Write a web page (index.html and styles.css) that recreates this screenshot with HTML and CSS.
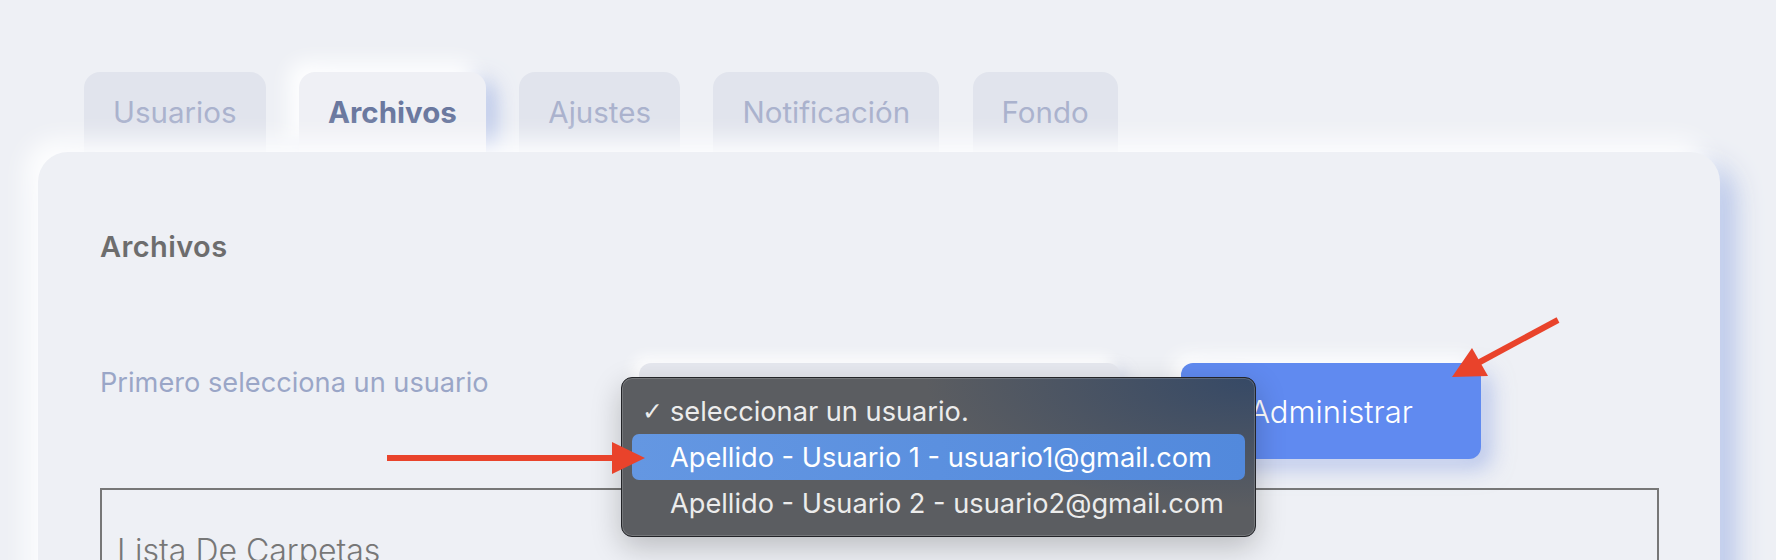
FILE: index.html
```html
<!DOCTYPE html>
<html lang="es">
<head>
<meta charset="utf-8">
<title>Archivos</title>
<link rel="stylesheet" href="styles.css">
</head>
<body>
<div class="page">
  <nav class="tabs">
    <div class="tab">Usuarios</div>
    <div class="tab tab-active">Archivos</div>
    <div class="tab">Ajustes</div>
    <div class="tab">Notificación</div>
    <div class="tab">Fondo</div>
  </nav>
  <section class="card">
    <h2 class="card-title">Archivos</h2>
    <div class="form-row">
      <label class="form-label">Primero selecciona un usuario</label>
      <div class="select"></div>
      <button class="btn">Administrar</button>
    </div>
    <div class="folder-box">
      <p class="folder-title">Lista De Carpetas</p>
    </div>
  </section>
  <ul class="dropdown">
    <li class="dd-item"><span class="dd-check">✓</span>seleccionar un usuario.</li>
    <li class="dd-item dd-hover"><span class="dd-check"></span>Apellido - Usuario 1 - usuario1@gmail.com</li>
    <li class="dd-item"><span class="dd-check"></span>Apellido - Usuario 2 - usuario2@gmail.com</li>
  </ul>
  <svg class="annotations" width="1776" height="560" viewBox="0 0 1776 560">
    <line x1="387" y1="458" x2="615" y2="458" stroke="#e9432b" stroke-width="6"/>
    <polygon points="612,442 645,458 612,474" fill="#e9432b"/>
    <line x1="1558" y1="320" x2="1478" y2="363" stroke="#e9432b" stroke-width="6"/>
    <polygon points="1452,377 1472,348 1488,376" fill="#e9432b"/>
  </svg>
</div>
</body>
</html>
```
FILE: styles.css
```css
* { box-sizing: border-box; }
html, body { margin: 0; padding: 0; }
body {
  background: #eef0f5;
  font-family: Inter, "Noto Sans", sans-serif;
}
.page {
  position: relative;
  width: 1776px;
  height: 560px;
  overflow: hidden;
  padding: 72px 0 0 38px;
}
.tabs {
  display: flex;
  gap: 33.5px;
  margin-left: 46px;
  height: 80px;
}
.tab {
  height: 80px;
  padding: 0 29px;
  display: flex;
  align-items: center;
  justify-content: center;
  background: #e1e4ed;
  border-radius: 16px 16px 0 0;
  color: #aab2cd;
  font-size: 29.5px;
  font-weight: 400;
  letter-spacing: 0;
}
.tab-active {
  background: #eff0f5;
  color: #6a789f;
  font-weight: 700;
  box-shadow: -10px -10px 20px #ffffff, 10px 8px 20px rgba(165, 183, 228, 0.75);
}
.card {
  position: relative;
  width: 1682px;
  height: 560px;
  background: #eef0f5;
  border-radius: 30px;
  padding: 77px 61px 0 62px;
  box-shadow: -12px -12px 24px rgba(255, 255, 255, 0.95), 14px 14px 28px rgba(176, 192, 232, 0.95);
}
.card-title {
  margin: 0;
  font-size: 29px;
  line-height: 36px;
  font-weight: 600;
  color: #6d6d6d;
  letter-spacing: 0.4px;
}
.form-row {
  display: flex;
  align-items: flex-start;
  margin-top: 98px;
}
.form-label {
  width: 539px;
  flex: none;
  padding-top: 2px;
  font-size: 27.2px;
  line-height: 36px;
  font-weight: 400;
  color: #9aa6c7;
}
.select {
  width: 481px;
  height: 96px;
  flex: none;
  border-radius: 12px;
  background: #e6e8ef;
  box-shadow: -6px -6px 14px #ffffff, 6px 6px 14px rgba(176, 188, 222, 0.5);
}
.btn {
  width: 300px;
  height: 96px;
  flex: none;
  margin-left: 61px;
  border: none;
  border-radius: 12px;
  background: #608af0;
  color: #ffffff;
  font-family: Inter, "Noto Sans", sans-serif;
  font-size: 31px;
  font-weight: 300;
  box-shadow: -8px -8px 18px #ffffff, 10px 10px 22px rgba(140, 162, 225, 0.55);
}
.folder-box {
  margin-top: 29px;
  height: 220px;
  border: 2px solid #777777;
  padding: 43px 15px 0;
}
.folder-title {
  margin: 0;
  font-size: 32px;
  line-height: 36px;
  font-weight: 300;
  color: #777777;
}
.dropdown {
  position: absolute;
  left: 621px;
  top: 377px;
  width: 635px;
  height: 160px;
  margin: 0;
  padding: 10px 10px;
  list-style: none;
  border: 1px solid #232428;
  border-radius: 11px;
  background:
    radial-gradient(ellipse 330px 130px at 100% 0%, rgba(52, 72, 102, 0.95), rgba(60, 75, 100, 0) 100%),
    #5b5d61;
  box-shadow: inset 0 0 0 1px rgba(255, 255, 255, 0.16), 0 10px 30px rgba(0, 0, 0, 0.22);
}
.dd-item {
  display: flex;
  align-items: center;
  height: 46px;
  padding-left: 10px;
  border-radius: 7px;
  color: #ececec;
  font-size: 27.2px;
  font-weight: 400;
  white-space: nowrap;
}
.dd-hover {
  background: linear-gradient(90deg, #6497e2, #5289dc);
  color: #ffffff;
}
.dd-check {
  width: 28px;
  flex: none;
  font-family: "DejaVu Sans", sans-serif;
  font-size: 25px;
}
.annotations {
  position: absolute;
  left: 0;
  top: 0;
  pointer-events: none;
}
```
